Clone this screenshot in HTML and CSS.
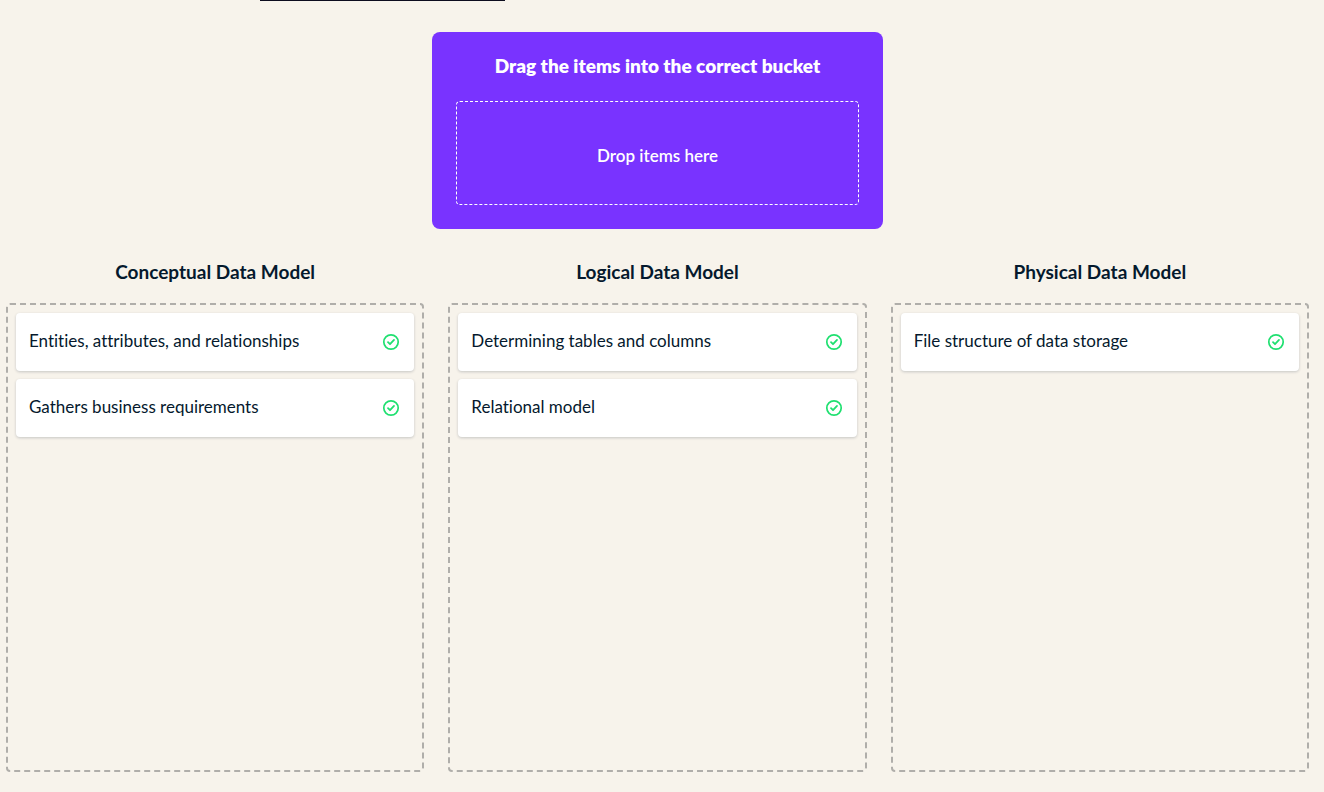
FILE: index.html
```html
<!DOCTYPE html>
<html lang="en">
<head>
<meta charset="utf-8">
<meta name="viewport" content="width=device-width, initial-scale=1">
<title>Drag the items into the correct bucket</title>
<link rel="stylesheet" href="styles.css">
</head>
<body>
<svg class="sprite" aria-hidden="true">
  <symbol id="check" viewBox="0 0 18 18">
    <circle cx="9" cy="9" r="7.2" fill="none" stroke="currentColor" stroke-width="1.7"/>
    <path d="M6 9.2 8 11.2 12 6.9" fill="none" stroke="currentColor" stroke-width="1.8" stroke-linecap="round" stroke-linejoin="round"/>
  </symbol>
</svg>
<div class="top-edge"></div>
<main class="exercise">
  <section class="source">
    <h1 class="source-title">Drag the items into the correct bucket</h1>
    <div class="drop-area">Drop items here</div>
  </section>
  <div class="buckets">
    <section class="column">
      <h2 class="column-title">Conceptual Data Model</h2>
      <ul class="bucket">
        <li class="card"><span class="label">Entities, attributes, and relationships</span><svg class="check" role="img" aria-label="Correct"><use href="#check"/></svg></li>
        <li class="card"><span class="label">Gathers business requirements</span><svg class="check" role="img" aria-label="Correct"><use href="#check"/></svg></li>
      </ul>
    </section>
    <section class="column">
      <h2 class="column-title">Logical Data Model</h2>
      <ul class="bucket">
        <li class="card"><span class="label">Determining tables and columns</span><svg class="check" role="img" aria-label="Correct"><use href="#check"/></svg></li>
        <li class="card"><span class="label">Relational model</span><svg class="check" role="img" aria-label="Correct"><use href="#check"/></svg></li>
      </ul>
    </section>
    <section class="column">
      <h2 class="column-title">Physical Data Model</h2>
      <ul class="bucket">
        <li class="card"><span class="label">File structure of data storage</span><svg class="check" role="img" aria-label="Correct"><use href="#check"/></svg></li>
      </ul>
    </section>
  </div>
</main>
</body>
</html>
```
FILE: styles.css
```css
* { box-sizing: border-box; }

body {
  display: flex;
  flex-direction: column;
  min-height: 100vh;
  margin: 0;
  background: #f7f3eb;
  color: #05192d;
  font: 17px/24px Lato, "Liberation Sans", sans-serif;
  font-variant-ligatures: none;
}

.sprite {
  position: absolute;
  width: 0;
  height: 0;
}

.top-edge {
  width: 245px;
  height: 1px;
  margin-left: 260px;
  background: #0c0c1e;
}

.exercise {
  display: flex;
  flex: 1;
  flex-direction: column;
  gap: 31px;
  padding: 31px 15px 20px 6px;
}

.source {
  display: flex;
  flex-direction: column;
  gap: 23px;
  align-self: center;
  width: 100%;
  max-width: 451px;
  padding: 22px 24px 24px;
  border-radius: 8px;
  background: #7933ff;
  color: #fff;
  text-align: center;
}

.source-title,
.column-title {
  margin: 0;
  font-size: 19px;
  font-weight: 800;
  line-height: 24px;
  text-align: center;
}

.column-title { font-weight: 700; }

.drop-area {
  padding: 42px 16px 36px;
  border: 1px dashed #fff;
  border-radius: 4px;
  font-weight: 600;
}

.buckets {
  display: grid;
  flex: 1;
  grid-template-columns: repeat(3, minmax(0, 1fr));
  gap: 24px;
}

.column {
  display: flex;
  flex-direction: column;
  gap: 19px;
}

.bucket {
  display: flex;
  flex: 1;
  flex-direction: column;
  gap: 8px;
  margin: 0;
  padding: 8px;
  border: 2px dashed #b0aeaa;
  border-radius: 4px;
  list-style: none;
}

.card {
  display: flex;
  align-items: center;
  justify-content: space-between;
  gap: 16px;
  min-height: 58px;
  padding: 16px 14px 16px 13px;
  border-radius: 4px;
  background: #fff;
  box-shadow: 0 1px 3px rgba(5, 25, 45, 0.2);
}

.label { padding-bottom: 2px; }

.check {
  flex: none;
  width: 18px;
  height: 18px;
  color: #1fe070;
}
```
